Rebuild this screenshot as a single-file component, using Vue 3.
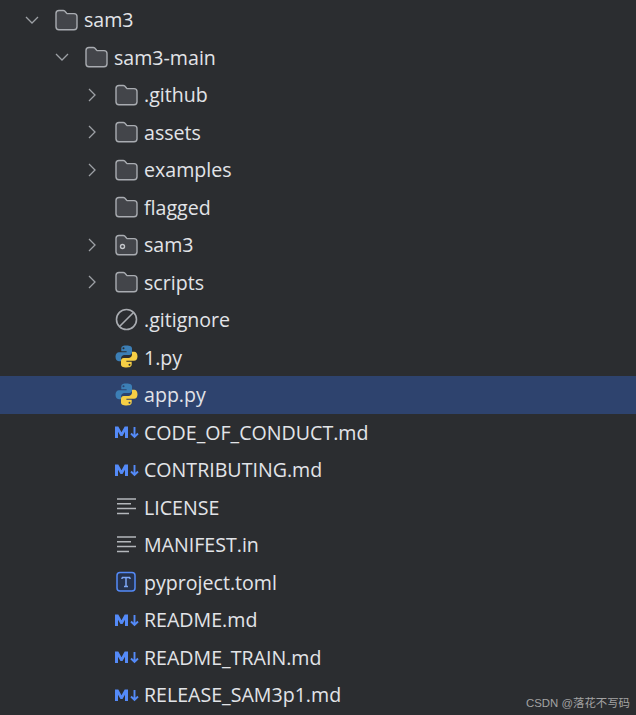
<script setup>
const rows = [
  { name: 'sam3', level: 0, icon: 'folder', arrow: 'down' },
  { name: 'sam3-main', level: 1, icon: 'folder', arrow: 'down' },
  { name: '.github', level: 2, icon: 'folder', arrow: 'right' },
  { name: 'assets', level: 2, icon: 'folder', arrow: 'right' },
  { name: 'examples', level: 2, icon: 'folder', arrow: 'right' },
  { name: 'flagged', level: 2, icon: 'folder' },
  { name: 'sam3', level: 2, icon: 'package', arrow: 'right' },
  { name: 'scripts', level: 2, icon: 'folder', arrow: 'right' },
  { name: '.gitignore', level: 2, icon: 'ignore' },
  { name: '1.py', level: 2, icon: 'python' },
  { name: 'app.py', level: 2, icon: 'python', selected: true },
  { name: 'CODE_OF_CONDUCT.md', level: 2, icon: 'md' },
  { name: 'CONTRIBUTING.md', level: 2, icon: 'md' },
  { name: 'LICENSE', level: 2, icon: 'text' },
  { name: 'MANIFEST.in', level: 2, icon: 'text' },
  { name: 'pyproject.toml', level: 2, icon: 'toml' },
  { name: 'README.md', level: 2, icon: 'md' },
  { name: 'README_TRAIN.md', level: 2, icon: 'md' },
  { name: 'RELEASE_SAM3p1.md', level: 2, icon: 'md' },
]
</script>

<template>
  <div class="tree">
    <div
      v-for="(row, i) in rows"
      :key="i"
      class="row"
      :class="[`level-${row.level}`, { selected: row.selected }]"
    >
      <span class="chevron">
        <svg v-if="row.arrow === 'down'" width="16" height="16" viewBox="0 0 16 16" fill="none">
          <path d="M2 5l6 6 6-6" stroke="#9da0a5" stroke-width="1.3" />
        </svg>
        <svg v-else-if="row.arrow === 'right'" width="16" height="16" viewBox="0 0 16 16" fill="none">
          <path d="M5 2l6 6-6 6" stroke="#9da0a5" stroke-width="1.3" />
        </svg>
      </span>
      <svg class="icon" width="24" height="24" viewBox="0 0 24 24" fill="none">
        <template v-if="row.icon === 'folder' || row.icon === 'package'">
          <path
            d="M2 5.500a3 3 0 0 1 3-3h4.200c.6 0 1.100.2 1.500.6l2 2.100c.3.3.7.4 1.100.4h6.200a3 3 0 0 1 3 3v10.200a3 3 0 0 1-3 3H5a3 3 0 0 1-3-3z"
            fill="#43454a"
            stroke="#a9acb1"
            stroke-width="1.400"
          />
          <circle v-if="row.icon === 'package'" cx="8.500" cy="13.500" r="2" stroke="#c5c7cb" stroke-width="1.400" />
        </template>
        <template v-else-if="row.icon === 'ignore'">
          <circle cx="12.500" cy="11.500" r="10" stroke="#a9acb1" stroke-width="1.600" />
          <path d="M5.500 18.500L19.500 4.500" stroke="#a9acb1" stroke-width="1.600" />
        </template>
        <template v-else-if="row.icon === 'python'">
          <g transform="translate(0.500 -0.500)">
            <path
              d="M11.800 1C7 1 6.800 2.900 6.800 4.200V6.700h5.300v1H4.500C2.500 7.700 1 9.500 1 12.100c0 2.800 1.300 4.700 3.300 4.700h2.200v-2.900c0-2 1.700-3.400 3.500-3.400h4.800c1.600 0 2.700-1.300 2.700-2.800V4c0-1.700-1.500-3-5.700-3zM9 2.700a1 1 0 1 1 0 2 1 1 0 0 1 0-2z"
              fill="#3c7fb6"
            />
            <path
              d="M12.200 23c4.800 0 5-1.900 5-3.200v-2.500h-5.300v-1h7.600c2 0 3.500-1.800 3.500-4.400 0-2.800-1.300-4.700-3.300-4.700h-2.200v2.900c0 2-1.700 3.400-3.500 3.400H9.200c-1.600 0-2.700 1.300-2.700 2.800V20c0 1.700 1.500 3 5.700 3zM15 21.300a1 1 0 1 1 0-2 1 1 0 0 1 0 2z"
              fill="#f6cf45"
            />
          </g>
        </template>
        <template v-else-if="row.icon === 'md'">
          <path d="M1 18V6.500h3.300L7.500 12.200l3.200-5.700H14V18h-3v-6.300L8.500 16H6.500L4 11.700V18z" fill="#548af7" />
          <path d="M20.500 7v10M17 13.500l3.500 3.500 3.500-3.500" stroke="#548af7" stroke-width="1.900" />
        </template>
        <template v-else-if="row.icon === 'text'">
          <path
            d="M3 4h19M3 8.700h14M3 13.500h19M3 18.500h12"
            stroke="#b4b7bb"
            stroke-width="1.400"
          />
        </template>
        <template v-else-if="row.icon === 'toml'">
          <rect x="3" y="2.500" width="18" height="18.500" rx="3" fill="#25324d" stroke="#548af7" stroke-width="1.500" />
          <path d="M8 7.500h8M8 7.500v1.500M16 7.500v1.500M12 7.500v9M10 16.500h4" stroke="#7da7f7" stroke-width="1.500" />
        </template>
      </svg>
      <span class="label">{{ row.name }}</span>
    </div>
    <div class="watermark">CSDN @落花不写码</div>
  </div>
</template>

<style>
html, body {
  margin: 0;
  background: #2b2d30;
}
</style>

<style scoped>
.tree {
  position: relative;
  width: 636px;
  height: 715px;
  padding-top: 1px;
  box-sizing: border-box;
  overflow: hidden;
  background: #2b2d30;
  font-family: "Open Sans", "Noto Sans", sans-serif;
}
.row {
  display: flex;
  align-items: center;
  height: 37.5px;
  color: #e2e4e8;
  font-size: 19.6px;
}
.level-0 { padding-left: 17px; }
.level-1 { padding-left: 47px; }
.level-2 { padding-left: 77px; }
.selected { background: #2e436e; }
.chevron {
  display: flex;
  justify-content: center;
  align-items: center;
  width: 30px;
  height: 16px;
  margin-right: 7px;
  flex: none;
}
.icon {
  flex: none;
  margin-right: 6px;
  overflow: visible;
}
.label {
  white-space: nowrap;
}
.watermark {
  position: absolute;
  right: 6px;
  bottom: 5px;
  color: #a3a3a3;
  font-family: "Liberation Sans", "Noto Sans CJK SC", sans-serif;
  font-size: 11.4px;
  line-height: 14px;
}
</style>
